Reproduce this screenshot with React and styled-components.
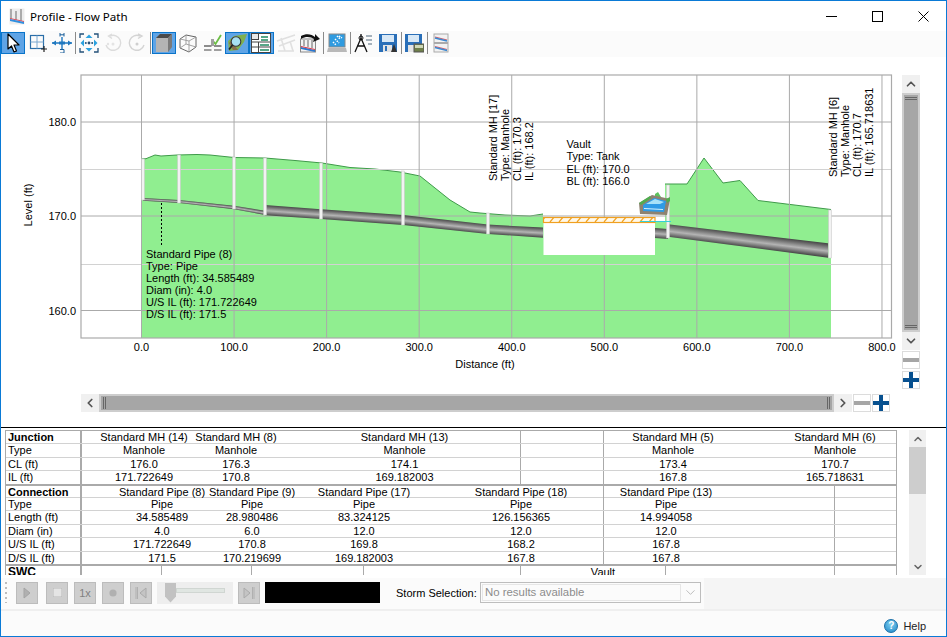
import React from "react";
import styled, { createGlobalStyle } from "styled-components";
import { ChevronUp, ChevronDown, ChevronLeft, ChevronRight } from "lucide-react";

const GlobalStyle = createGlobalStyle`
  html, body { margin: 0; padding: 0; background: #fff; }
  body { font-family: "Liberation Sans", Arial, sans-serif; font-size: 11px; color: #000; }
`;

const Window = styled.div`
  box-sizing: border-box;
  width: 947px;
  height: 637px;
  border: 1px solid #0a7ad6;
  display: flex;
  flex-direction: column;
  background: #fff;
  overflow: hidden;
`;

const TitleBar = styled.div`
  height: 30px;
  flex: none;
  display: flex;
  align-items: center;
  padding-left: 8px;
  padding-top: 1px;
  box-sizing: border-box;
`;

const TitleText = styled.span`
  margin-left: 5px;
  font-family: "Noto Sans", sans-serif;
  font-size: 11.6px;
`;

const WindowControls = styled.div`
  margin-left: auto;
  display: flex;
  gap: 35px;
  padding-right: 17px;
`;

const Toolbar = styled.div`
  height: 26px;
  flex: none;
  box-sizing: border-box;
  padding-bottom: 3px;
  display: flex;
  align-items: center;
  background: #fbfbfb;
`;

const ToolButton = styled.div`
  box-sizing: border-box;
  width: 24.4px;
  height: 22px;
  display: flex;
  align-items: center;
  justify-content: center;
  border: 1px solid ${(p) => (p.$active ? "#0a74c9" : "transparent")};
  background: ${(p) => (p.$active ? "#5fa4e6" : "transparent")};
`;

const ToolSep = styled.div`
  width: 1px;
  height: 22px;
  margin: 0 0.6px;
  background: #8a8a8a;
`;

const Main = styled.div`
  height: 370px;
  flex: none;
  display: grid;
  grid-template-columns: 901px 18px;
  grid-template-rows: 337px 33px;
`;

const ChartSvg = styled.svg`
  display: block;
  width: 901px;
  height: 337px;
`;

const VBar = styled.div`
  margin-top: 18px;
  width: 18px;
  height: 314px;
  display: flex;
  flex-direction: column;
`;

const HBar = styled.div`
  margin-left: 80px;
  width: 809px;
  height: 18px;
  display: flex;
`;

const ScrollArrow = styled.div`
  flex: none;
  width: 18px;
  height: 18px;
  background: #f0f0f0;
  color: #555;
  display: flex;
  align-items: center;
  justify-content: center;
`;

const ScrollTrack = styled.div`
  flex: 1;
  box-sizing: border-box;
  background: #cdcdcd;
  padding: 2px;
  display: flex;
`;

const ScrollThumb = styled.div`
  flex: 1;
  background: #a6a6a6;
  display: flex;
  flex-direction: ${(p) => (p.$vertical ? "column" : "row")};
  justify-content: space-between;
  padding: ${(p) => (p.$vertical ? "2px 1px" : "1px 2px")};
`;

const Grip = styled.div`
  ${(p) =>
    p.$vertical
      ? "height: 3px; border-top: 1px solid #666; border-bottom: 1px solid #666;"
      : "width: 3px; border-left: 1px solid #666; border-right: 1px solid #666;"}
  box-sizing: border-box;
`;

const ZoomButton = styled.div`
  box-sizing: border-box;
  flex: none;
  width: 18px;
  height: 18px;
  border: 1px solid #dcdcdc;
  background: #fff;
  position: relative;
  margin: ${(p) => p.$margin || 0};
  &::before {
    content: "";
    position: absolute;
    left: 0;
    right: 0;
    top: 6px;
    height: 4px;
    background: ${(p) => (p.$plus ? "#07508f" : "#a6a6a6")};
  }
  &::after {
    content: "";
    position: absolute;
    top: 0;
    bottom: 0;
    left: 6px;
    width: 4px;
    background: ${(p) => (p.$plus ? "#07508f" : "transparent")};
  }
`;

const Rule = styled.div`
  height: 1px;
  flex: none;
  background: #000;
`;

const TableArea = styled.div`
  height: 150px;
  flex: none;
  box-sizing: border-box;
  padding: 2px 0 0 4px;
  display: flex;
  align-items: flex-start;
`;

const TableViewport = styled.div`
  width: 892px;
  height: 145px;
  overflow: hidden;
  box-sizing: border-box;
  border-left: 1px solid #aaa;
  border-right: 1px solid #aaa;
  border-top: 1px solid #aaa;
`;

const Section = styled.div`
  border-top: ${(p) => (p.$first ? "none" : "2px solid #aaa")};
`;

const Row = styled.div`
  box-sizing: border-box;
  height: ${(p) => p.$h}px;
  display: grid;
  grid-template-columns: ${(p) => p.$columns};
  border-bottom: ${(p) => (p.$last ? "none" : "1px solid #d2d2d2")};
  line-height: 12px;
`;

const LabelCell = styled.div`
  box-sizing: border-box;
  border-right: 2px solid #aaa;
  padding-left: 2px;
  font-weight: ${(p) => (p.$bold ? 700 : 400)};
  font-size: ${(p) => (p.$big ? "12px" : "11px")};
  white-space: nowrap;
`;

const Cell = styled.div`
  box-sizing: border-box;
  min-width: 0;
  display: flex;
  justify-content: center;
  white-space: nowrap;
  padding-left: ${(p) => p.$pad || 0}px;
  border-right: ${(p) => (p.$line ? "1px solid #aaa" : "none")};
`;

const TableScroll = styled.div`
  margin-left: 12px;
  width: 17px;
  height: 145px;
  background: #f0f0f0;
  display: flex;
  flex-direction: column;
  color: #666;
`;

const TableArrow = styled.div`
  height: 17px;
  flex: none;
  display: flex;
  align-items: center;
  justify-content: center;
  margin-top: ${(p) => (p.$end ? "auto" : 0)};
`;

const TableThumb = styled.div`
  height: 47px;
  background: #cdcdcd;
`;

const PlayBand = styled.div`
  height: 33px;
  flex: none;
  display: flex;
  background: #f5f5f5;
  border-bottom: 2px solid #efefef;
  box-sizing: border-box;
`;

const PlayStrip = styled.div`
  width: 703px;
  background: #fbfbfb;
  display: flex;
  align-items: center;
  padding: 0 0 2px 4px;
  box-sizing: border-box;
`;

const Gripper = styled.div`
  width: 2px;
  height: 21px;
  margin-right: 9px;
  background: repeating-linear-gradient(to bottom, #bdbdbd 0 2px, transparent 2px 5px);
`;

const PlayButton = styled.div`
  box-sizing: border-box;
  width: 22px;
  height: 22px;
  margin-right: ${(p) => p.$gap ?? 6}px;
  border: 1px solid #bcbcbc;
  background: #cecece;
  color: #808080;
  font-size: 11px;
  display: flex;
  align-items: center;
  justify-content: center;
`;

const SliderPanel = styled.div`
  box-sizing: border-box;
  width: 76px;
  height: 22px;
  margin: 0 5px 0 -1px;
  background: #eee;
  display: flex;
  align-items: center;
  padding-left: 8px;
`;

const SliderThumb = styled.div`
  width: 11px;
  height: 20px;
  background: #c2c2c2;
  clip-path: polygon(0 0, 100% 0, 100% 70%, 50% 100%, 0 70%);
  flex: none;
`;

const SliderTrack = styled.div`
  width: 49px;
  height: 5px;
  margin-top: -4px;
  background: #e0e6e2;
  border: 1px solid #d0d6d2;
  box-sizing: border-box;
`;

const Clock = styled.div`
  width: 115px;
  height: 21px;
  margin-left: 5px;
  background: #000;
`;

const StormLabel = styled.span`
  margin-left: 16px;
  font-size: 11px;
  width: 84px;
`;

const StormSelect = styled.div`
  box-sizing: border-box;
  width: 221px;
  height: 21px;
  border: 1px solid #bdbdbd;
  background: #fbfbfb;
  padding: 1px;
  display: flex;
  align-items: stretch;
`;

const StormValue = styled.div`
  flex: 1;
  border: 1px solid #e6e6e6;
  color: #8c8c8c;
  font-size: 11.4px;
  line-height: 15px;
  padding-left: 2px;
`;

const StormArrow = styled.div`
  width: 18px;
  color: #aaa;
  display: flex;
  align-items: center;
  justify-content: center;
`;

const StatusBar = styled.div`
  flex: 1;
  background: #fbfbfb;
  display: flex;
  align-items: center;
  justify-content: flex-end;
  padding: 4px 20px 0 0;
`;

const HelpIcon = styled.span`
  box-sizing: border-box;
  width: 14px;
  height: 14px;
  border-radius: 50%;
  background: radial-gradient(circle at 50% 35%, #7fd0f0, #1f87c8);
  border: 1px solid #1a6fa8;
  color: #fff;
  font-size: 10px;
  font-weight: 700;
  line-height: 12px;
  text-align: center;
  margin-right: 5px;
`;

const HelpText = styled.span`
  font-size: 11px;
  color: #222;
`;

/* ---------- chart data ---------- */

const xAt = (d) => 141.5 + d * 0.9256;
const xTicks = [0, 100, 200, 300, 400, 500, 600, 700, 800];
const yMajor = [
  [122, "180.0"],
  [216, "170.0"],
  [310.5, "160.0"],
];
const yMinor = [169, 264];

const groundLeft =
  "142,159 146,158.7 155,155 161,156 177,155 197,154.5 210,155 234,157.5 265,158 295,160.5 322,163 350,167.5 375,169 400,172 420,176 450,200 470,212 480,213 505,215 530,216 543,214";
const groundRight = "665,184 687,184 704,158 723,183 740,180.5 758,200.5 831,209.5";
const terrain = `142,338 ${groundLeft} 543,222 665,222 ${groundRight} 831,338`;

// x1, top1, bottom1, x2, top2, bottom2
const pipes = [
  [143, 198, 200.7, 179, 200, 203],
  [179, 200, 203, 234, 205.7, 209.3],
  [234, 205.7, 209.3, 265, 210.7, 215],
  [265, 205, 215.3, 321, 209.3, 219],
  [321, 209.3, 219, 403, 215, 225],
  [403, 215, 225, 488, 224.5, 234],
  [488, 224.5, 234, 543, 227.6, 237.7],
  [655, 228, 238, 668, 229, 239],
  [668, 224.3, 236.7, 828, 243.3, 257.7],
];

const poles = [
  [143, 159, 200],
  [179, 155, 203],
  [234, 157, 209],
  [265, 158, 215],
  [321, 163, 219],
  [403, 171, 225],
  [488, 213, 234],
  [668, 185, 238],
  [830, 210, 258],
];

const pipeNote = [
  "Standard Pipe (8)",
  "Type: Pipe",
  "Length (ft): 34.585489",
  "Diam (in): 4.0",
  "U/S IL (ft): 171.722649",
  "D/S IL (ft): 171.5",
];
const vaultNote = ["Vault", "Type: Tank", "EL (ft): 170.0", "BL (ft): 166.0"];
const mh17 = ["Standard MH [17]", "Type: Manhole", "CL (ft): 170.3", "IL (ft): 168.2"];
const mh6 = ["Standard MH [6]", "Type: Manhole", "CL (ft): 170.7", "IL (ft): 165.718631"];

function pipeGradient(p) {
  const [x1, t1, b1, x2, t2, b2] = p;
  const mx = (x1 + x2) / 2;
  const top = (t1 + t2) / 2;
  const bot = (b1 + b2) / 2;
  const my = (top + bot) / 2;
  const dx = x2 - x1;
  const dy = (t2 + b2) / 2 - (t1 + b1) / 2;
  const len = Math.hypot(dx, dy);
  const half = ((bot - top) / 2) * (dx / len);
  const nx = (-dy / len) * half;
  const ny = (dx / len) * half;
  return { x1: mx - nx, y1: my - ny, x2: mx + nx, y2: my + ny };
}

function Chart() {
  return (
    <ChartSvg viewBox="1 57 901 337" fontFamily="'Liberation Sans', Arial, sans-serif" fontSize="11">
      <defs>
        <pattern id="hatch" width="9" height="6" patternUnits="userSpaceOnUse">
          <rect width="9" height="6" fill="#fff8e8" />
          <path d="M1 6 L6 0" stroke="#f0a020" strokeWidth="1.2" />
        </pattern>
        {pipes.map((p, i) => (
          <linearGradient key={i} id={`pipe${i}`} gradientUnits="userSpaceOnUse" {...pipeGradient(p)}>
            <stop offset="0" stopColor="#4a4a4a" />
            <stop offset="0.55" stopColor="#b4b4b4" />
            <stop offset="1" stopColor="#4a4a4a" />
          </linearGradient>
        ))}
      </defs>

      <rect x="81" y="75" width="810" height="263" fill="#fff" />
      <polygon points={terrain} fill="#90ee90" />
      <polyline points={groundLeft} fill="none" stroke="#3f9a4a" strokeWidth="1" />
      <polyline points={groundRight} fill="none" stroke="#3f9a4a" strokeWidth="1" />

      {yMinor.map((y) => (
        <line key={y} x1="81" x2="891" y1={y + 0.5} y2={y + 0.5} stroke="#d2d2d2" strokeWidth="1" />
      ))}
      {yMajor.map(([y]) => (
        <line key={y} x1="81" x2="891" y1={y} y2={y} stroke="#aaa" strokeWidth="1" />
      ))}
      {xTicks.map((t) => (
        <line key={t} x1={xAt(t)} x2={xAt(t)} y1="75" y2="338" stroke="#aaa" strokeWidth="1" />
      ))}
      <rect x="81" y="75" width="810.5" height="263" fill="none" stroke="#aaa" strokeWidth="1.2" />

      {/* vault */}
      <rect x="543.5" y="222" width="111.5" height="33" fill="#fff" />
      <rect x="543.5" y="217.5" width="111.5" height="5" fill="url(#hatch)" stroke="#f0a020" strokeWidth="1.2" />

      {pipes.map((p, i) => (
        <polygon
          key={i}
          points={`${p[0]},${p[1]} ${p[3]},${p[4]} ${p[3]},${p[5]} ${p[0]},${p[2]}`}
          fill={`url(#pipe${i})`}
        />
      ))}
      {poles.map(([x, y1, y2]) => (
        <rect key={x} x={x - 1.5} y={y1} width="3" height={y2 - y1} fill="#f2f2f2" stroke="#c4c4c4" strokeWidth="0.5" />
      ))}

      <line x1="640" x2="671" y1="221.5" y2="221.5" stroke="#35d0d8" strokeWidth="1" />

      {/* tank */}
      <polygon points="655,194 658,192 661,197 655,197" fill="#5cc25c" />
      <polygon points="639,203 652,195 670,199 667,215 640,214" fill="#8d8271" />
      <polygon points="643,205 654,198 666,201 664,212 643,211" fill="#2f9be6" />
      <polygon points="646,204 655,199 664,202 660,204" fill="#a8e2f8" />
      <polygon points="644,208 663,209 663,210 644,209" fill="#d4f2fc" />
      <polygon points="639,203 650,196 651,198 641,205" fill="#4fae4f" />
      <polygon points="666,199 670,197 670,201 667,203" fill="#4fae4f" />

      <line x1="161.5" x2="161.5" y1="203" y2="245" stroke="#000" strokeWidth="1" strokeDasharray="2 2" />

      {pipeNote.map((t, i) => (
        <text key={t} x="146" y={258 + i * 11.9}>{t}</text>
      ))}
      {vaultNote.map((t, i) => (
        <text key={t} x="566.5" y={148 + i * 12.4}>{t}</text>
      ))}
      {mh17.map((t, i) => (
        <text key={t} transform={`translate(${497 + i * 12} 181) rotate(-90)`}>{t}</text>
      ))}
      {mh6.map((t, i) => (
        <text key={t} transform={`translate(${837 + i * 12} 177) rotate(-90)`}>{t}</text>
      ))}

      {yMajor.map(([y, label]) => (
        <text key={label} x="76" y={y + 4} textAnchor="end">{label}</text>
      ))}
      {xTicks.map((t) => (
        <text key={t} x={xAt(t)} y="351" textAnchor="middle">{t.toFixed(1)}</text>
      ))}
      <text x="485" y="368" textAnchor="middle">Distance (ft)</text>
      <text transform="translate(32 205) rotate(-90)" textAnchor="middle">Level (ft)</text>
    </ChartSvg>
  );
}

/* ---------- table data ---------- */

const sections = [
  {
    columns: "76px 124px 60px 23px 232px 83px 138px 31px 124px",
    lines: [3, 4],
    rows: [
      { h: 13, label: "Junction", bold: true, cells: ["Standard MH (14)", "Standard MH (8)", "", "Standard MH (13)", "", "Standard MH (5)", "", "Standard MH (6)"] },
      { h: 14, label: "Type", cells: ["Manhole", "Manhole", "", "Manhole", "", "Manhole", "", "Manhole"] },
      { h: 13, label: "CL (ft)", cells: ["176.0", "176.3", "", "174.1", "", "173.4", "", "170.7"] },
      { h: 13, label: "IL (ft)", cells: ["171.722649", "170.8", "", "169.182003", "", "167.8", "", "165.718631"] },
    ],
  },
  {
    columns: "76px 160px 20px 204px 110px 28px 124px 107px",
    lines: [4, 6],
    rows: [
      { h: 12, label: "Connection", bold: true, cells: ["Standard Pipe (8)", "Standard Pipe (9)", "Standard Pipe (17)", "Standard Pipe (18)", "", "Standard Pipe (13)", ""] },
      { h: 13, label: "Type", cells: ["Pipe", "Pipe", "Pipe", "Pipe", "", "Pipe", ""] },
      { h: 14, label: "Length (ft)", cells: ["34.585489", "28.980486", "83.324125", "126.156365", "", "14.994058", ""] },
      { h: 13, label: "Diam (in)", cells: ["4.0", "6.0", "12.0", "12.0", "", "12.0", ""] },
      { h: 14, label: "U/S IL (ft)", cells: ["171.722649", "170.8", "169.8", "168.2", "", "167.8", ""] },
      { h: 12, label: "D/S IL (ft)", cells: ["171.5", "170.219699", "169.182003", "167.8", "", "167.8", ""] },
    ],
  },
  {
    columns: "76px 80px 90px 112px 157px 145px 169px",
    lines: [0, 1, 2, 3, 4, 5],
    rows: [
      { h: 14, label: "SWC", bold: true, big: true, cells: ["", "", "", "", "Vault", ""], pad: { 4: 20 } },
    ],
  },
];

function DataTable() {
  return (
    <TableViewport>
      {sections.map((section, s) => (
        <Section key={s} $first={s === 0}>
          {section.rows.map((row, r) => (
            <Row key={row.label} $h={row.h} $columns={section.columns} $last={r === section.rows.length - 1}>
              <LabelCell $bold={row.bold} $big={row.big}>{row.label}</LabelCell>
              {row.cells.map((c, i) => (
                <Cell key={i} $line={section.lines.includes(i)} $pad={row.pad?.[i]}>{c}</Cell>
              ))}
            </Row>
          ))}
        </Section>
      ))}
    </TableViewport>
  );
}

/* ---------- icons ---------- */

const Ico = ({ children, size = 20 }) => (
  <svg width={size} height={size} viewBox="0 0 20 20">{children}</svg>
);

const icons = {
  arrow: (
    <path d="M5 1 L5 16 L8.5 13 L11 19 L13.5 18 L11 12 L16 12 Z" fill="#fff" stroke="#000" strokeWidth="1.2" strokeLinejoin="round" />
  ),
  zoomBox: (
    <g fill="none">
      <rect x="2.5" y="2.5" width="13" height="13" stroke="#2a6ea8" strokeWidth="1.2" />
      <path d="M2.5 9 H15.5 M9 2.5 V15.5" stroke="#7aa8d0" />
      <path d="M16 13 V19 M13 16 H19" stroke="#222" strokeWidth="1.2" />
    </g>
  ),
  axes: (
    <g stroke="#1f78c0" fill="#1f78c0">
      <path d="M0 10 H20 M10 4 V16" strokeWidth="1.4" />
      <path d="M16 7.5 L20 10 L16 12.5 Z M4 7.5 L0 10 L4 12.5 Z" stroke="none" />
      <path d="M8 0 V3.5 M12 0 V3.5 M8 1.8 H12 M8 16.5 H12 V20 H8" strokeWidth="1" fill="none" stroke="#1a5f9a" />
      <rect x="7" y="8.5" width="6" height="3" stroke="none" />
    </g>
  ),
  extents: (
    <g>
      <path d="M1 5 V1 H5 M15 1 H19 V5 M1 15 V19 H5 M15 19 H19 V15" fill="none" stroke="#24517a" strokeWidth="1.3" />
      <path d="M10 1.5 L13.5 5 H6.5 Z M10 18.5 L13.5 15 H6.5 Z M1.5 10 L5 6.5 V13.5 Z M18.5 10 L15 6.5 V13.5 Z" fill="#2ba2e0" />
      <circle cx="10" cy="10" r="1.4" fill="#24517a" />
      <circle cx="6.8" cy="10" r="1" fill="#24517a" />
      <circle cx="13.2" cy="10" r="1" fill="#24517a" />
    </g>
  ),
  rotLeft: (
    <g fill="none" stroke="#dcdcdc" strokeWidth="1.4">
      <path d="M7 3 A7.5 7.5 0 1 1 3 12" />
      <path d="M9 1 L5.5 3 L9 5.5" />
      <circle cx="5" cy="11" r="1.2" fill="#e4e4e4" stroke="none" />
      <circle cx="10" cy="11" r="1.5" fill="#e4e4e4" stroke="none" />
    </g>
  ),
  rotRight: (
    <g fill="none" stroke="#d4d4d4" strokeWidth="1.4">
      <path d="M13 3 A7.5 7.5 0 1 0 17 12" />
      <path d="M11 1 L15 3 L11 5.5" />
      <circle cx="10" cy="11" r="1.5" fill="#cfcfcf" stroke="none" />
    </g>
  ),
  solid: (
    <g>
      <polygon points="2,5 6,1 18,1 18,14 14,19 2,19" fill="#9c9c9c" />
      <polygon points="2,5 6,1 18,1 14,5" fill="#4a4a4a" />
      <polygon points="14,5 18,1 18,14 14,19" fill="#7a7a7a" />
      <rect x="2" y="5" width="12" height="14" fill="#b4b4b4" />
    </g>
  ),
  wire: (
    <g fill="none" stroke="#555" strokeWidth="0.9">
      <polygon points="2,6 8,2 18,4 18,14 11,19 2,15" />
      <path d="M2 6 L11 8 L18 4 M11 8 V19 M8 2 V11 L2 15 M8 11 L18 14" stroke="#999" />
    </g>
  ),
  check: (
    <g>
      <path d="M10 8 L12.5 11 L18 2" fill="none" stroke="#6cbe44" strokeWidth="1.8" />
      <rect x="8" y="6" width="3" height="7" fill="#a0a0a0" />
      <rect x="1" y="12" width="7.5" height="2" fill="#8c8c8c" />
      <rect x="11" y="12" width="7.5" height="2" fill="#8c8c8c" />
      <rect x="1" y="16" width="7.5" height="2" fill="#a0a0a0" />
      <rect x="11" y="16" width="7.5" height="2" fill="#a0a0a0" />
    </g>
  ),
  earth: (
    <g>
      <polygon points="1,8 7,3 20,1 17,9 11,17 2,18" fill="#7fb04f" />
      <polygon points="2,10 6,17 11,17 4,8" fill="#8a6d4a" />
      <circle cx="9" cy="8.5" r="4.8" fill="#a8e0f2" stroke="#3a3a3a" strokeWidth="1.1" />
      <path d="M5.5 12 L2 16.5" stroke="#222" strokeWidth="1.8" />
    </g>
  ),
  grid: (
    <g>
      <rect x="0.5" y="0.5" width="19" height="19" fill="#fff" stroke="#444" />
      <rect x="0.5" y="0.5" width="7" height="6" fill="#e8e8e8" stroke="#444" />
      <path d="M0.5 9 H19.5 M0.5 14 H19.5 M7.5 9 V19.5" stroke="#444" />
      <path d="M10 4 H17 M10 7 H17 M9 12 H18 M9 17 H18" stroke="#1f8a5f" strokeWidth="1.5" />
    </g>
  ),
  pipesOff: (
    <g fill="none" stroke="#e0e0e0" strokeWidth="1.6">
      <path d="M1 8 L19 2 M3 13 L19 7 M5 5 L9 18 M14 8 L17 18 M2 18 H18" />
    </g>
  ),
  profile: (
    <g>
      <rect x="0.5" y="6" width="15" height="13" fill="#f4f4f4" stroke="#888" />
      <polygon points="1,14 15,17 15,19 1,16" fill="#2b78d0" />
      <polygon points="1,13 15,16 15,17 1,14" fill="#d83a4a" />
      <path d="M4 7 V13 M8 7 V14 M12 7 V15" stroke="#666" />
      <path d="M1 3 C6 0 12 1 15 4 L15 1 L20 6 L13 9 L14 6 C11 4 6 3 1 6 Z" fill="#111" />
    </g>
  ),
  monitor: (
    <g>
      <rect x="2" y="1" width="16" height="13" fill="#2f9be0" stroke="#8a8a8a" />
      <path d="M10 3 L13 6 M8 6 L12 10 M6 9 L9 12 M12 3 L15 5" stroke="#fff" strokeWidth="1.5" strokeDasharray="1.5 1" />
      <polygon points="1,15 19,15 20,19 0,19" fill="#b9b9b9" />
    </g>
  ),
  compass: (
    <g>
      <path d="M8 1 V5 M8 5 L2 19 M8 5 L14 19 M4 13 H12" fill="none" stroke="#111" strokeWidth="1.3" />
      <circle cx="8" cy="5" r="2" fill="none" stroke="#111" />
      <path d="M13 3 H19 M13 7 H19 M15 11 H19" stroke="#8a9aa8" strokeWidth="1.4" />
    </g>
  ),
  diskA: (
    <g>
      <rect x="1" y="1" width="18" height="18" fill="#2a6fb8" />
      <rect x="4" y="2" width="12" height="7" fill="#d8e8f6" />
      <rect x="5" y="12" width="9" height="7" fill="#e4e4e4" />
      <polygon points="13,19 16,11 19,19" fill="#333" />
      <rect x="7" y="13" width="2" height="5" fill="#2a6fb8" />
    </g>
  ),
  diskB: (
    <g>
      <rect x="1" y="1" width="17" height="18" fill="#2a6fb8" />
      <rect x="4" y="2" width="11" height="7" fill="#d8e8f6" />
      <rect x="4" y="12" width="6" height="7" fill="#e4e4e4" />
      <rect x="10" y="11" width="10" height="8" fill="#6f7f4a" stroke="#555" />
      <rect x="11" y="12" width="8" height="3" fill="#cfd8b8" />
    </g>
  ),
  charts: (
    <g>
      <rect x="3" y="1" width="14" height="8.5" fill="#f2f2f2" stroke="#aaa" />
      <rect x="3" y="10.5" width="14" height="8.5" fill="#f2f2f2" stroke="#aaa" />
      <path d="M4 4 L16 7 M4 13.5 L16 16.5" stroke="#d8606a" strokeWidth="1.2" />
      <path d="M4 5 L16 8 M4 14.5 L16 17.5" stroke="#3a88d0" strokeWidth="1.4" />
    </g>
  ),
};

const tools = [
  { icon: "arrow", active: true },
  { icon: "zoomBox" },
  { icon: "axes" },
  "sep",
  { icon: "extents" },
  { icon: "rotLeft" },
  { icon: "rotRight" },
  "sep",
  { icon: "solid", active: true },
  { icon: "wire" },
  { icon: "check" },
  { icon: "earth", active: true },
  { icon: "grid", active: true },
  { icon: "pipesOff" },
  { icon: "profile" },
  "sep",
  { icon: "monitor" },
  "sep",
  { icon: "compass" },
  { icon: "diskA" },
  "sep",
  { icon: "diskB" },
  "sep",
  { icon: "charts" },
];

function AppIcon() {
  return (
    <svg width="16" height="17" viewBox="0 0 16 17">
      <rect x="0.5" y="0.5" width="15" height="16" fill="#ededed" />
      <path d="M2 1 V11 M7 3 V12 M12 1 V13" stroke="#8f8f8f" strokeWidth="1.4" />
      <polygon points="1,10 15,13 15,14 1,11" fill="#e2505c" />
      <polygon points="1,11 15,14 15,16 1,13" fill="#2e8fe0" />
    </svg>
  );
}

export default function App() {
  return (
    <>
      <GlobalStyle />
      <Window>
        <TitleBar>
          <AppIcon />
          <TitleText>Profile - Flow Path</TitleText>
          <WindowControls>
            <svg width="11" height="11" viewBox="0 0 11 11"><path d="M0 5.5 H11" stroke="#000" /></svg>
            <svg width="11" height="11" viewBox="0 0 11 11"><rect x="0.5" y="0.5" width="10" height="10" fill="none" stroke="#000" /></svg>
            <svg width="11" height="11" viewBox="0 0 11 11"><path d="M0.5 0.5 L10.5 10.5 M10.5 0.5 L0.5 10.5" stroke="#000" /></svg>
          </WindowControls>
        </TitleBar>

        <Toolbar>
          {tools.map((t, i) =>
            t === "sep" ? (
              <ToolSep key={i} />
            ) : (
              <ToolButton key={i} $active={t.active}>
                <Ico>{icons[t.icon]}</Ico>
              </ToolButton>
            )
          )}
        </Toolbar>

        <Main>
          <Chart />
          <VBar>
            <ScrollArrow><ChevronUp size={14} strokeWidth={3} /></ScrollArrow>
            <ScrollTrack>
              <ScrollThumb $vertical>
                <Grip $vertical />
                <Grip $vertical />
              </ScrollThumb>
            </ScrollTrack>
            <ScrollArrow><ChevronDown size={14} strokeWidth={3} /></ScrollArrow>
            <ZoomButton $margin="1px 0 2px" />
            <ZoomButton $plus />
          </VBar>
          <HBar>
            <ScrollArrow><ChevronLeft size={14} strokeWidth={3} /></ScrollArrow>
            <ScrollTrack>
              <ScrollThumb>
                <Grip />
                <Grip />
              </ScrollThumb>
            </ScrollTrack>
            <ScrollArrow><ChevronRight size={14} strokeWidth={3} /></ScrollArrow>
            <ZoomButton $margin="0 1px" />
            <ZoomButton $plus />
          </HBar>
          <div />
        </Main>

        <Rule />

        <TableArea>
          <DataTable />
          <TableScroll>
            <TableArrow><ChevronUp size={12} strokeWidth={3} /></TableArrow>
            <TableThumb />
            <TableArrow $end><ChevronDown size={12} strokeWidth={3} /></TableArrow>
          </TableScroll>
        </TableArea>

        <PlayBand>
          <PlayStrip>
            <Gripper />
            <PlayButton $gap={8}>
              <svg width="10" height="14" viewBox="0 0 10 14"><polygon points="2,2 8,7 2,12" fill="#b0b0b0" stroke="#a4a4a4" /></svg>
            </PlayButton>
            <PlayButton>
              <svg width="9" height="9" viewBox="0 0 10 10"><rect width="10" height="10" fill="#e4e4e4" stroke="#b4b4b4" /></svg>
            </PlayButton>
            <PlayButton>1x</PlayButton>
            <PlayButton>
              <svg width="8" height="8" viewBox="0 0 10 10"><circle cx="5" cy="5" r="4.5" fill="#b0b0b0" /></svg>
            </PlayButton>
            <PlayButton>
              <svg width="12" height="14" viewBox="0 0 12 14"><path d="M1 1 V13 M2.5 1 V13" stroke="#b0b0b0" /><polygon points="11,2 5,7 11,12" fill="#c4c4c4" stroke="#aaa" /></svg>
            </PlayButton>
            <SliderPanel>
              <SliderThumb />
              <SliderTrack />
            </SliderPanel>
            <PlayButton $gap={0}>
              <svg width="12" height="14" viewBox="0 0 12 14"><polygon points="1,2 7,7 1,12" fill="#c4c4c4" stroke="#aaa" /><path d="M9.5 1 V13 M11 1 V13" stroke="#b0b0b0" /></svg>
            </PlayButton>
            <Clock />
            <StormLabel>Storm Selection:</StormLabel>
            <StormSelect>
              <StormValue>No results available</StormValue>
              <StormArrow><ChevronDown size={15} strokeWidth={1.2} /></StormArrow>
            </StormSelect>
          </PlayStrip>
        </PlayBand>

        <StatusBar>
          <HelpIcon>?</HelpIcon>
          <HelpText>Help</HelpText>
        </StatusBar>
      </Window>
    </>
  );
}
